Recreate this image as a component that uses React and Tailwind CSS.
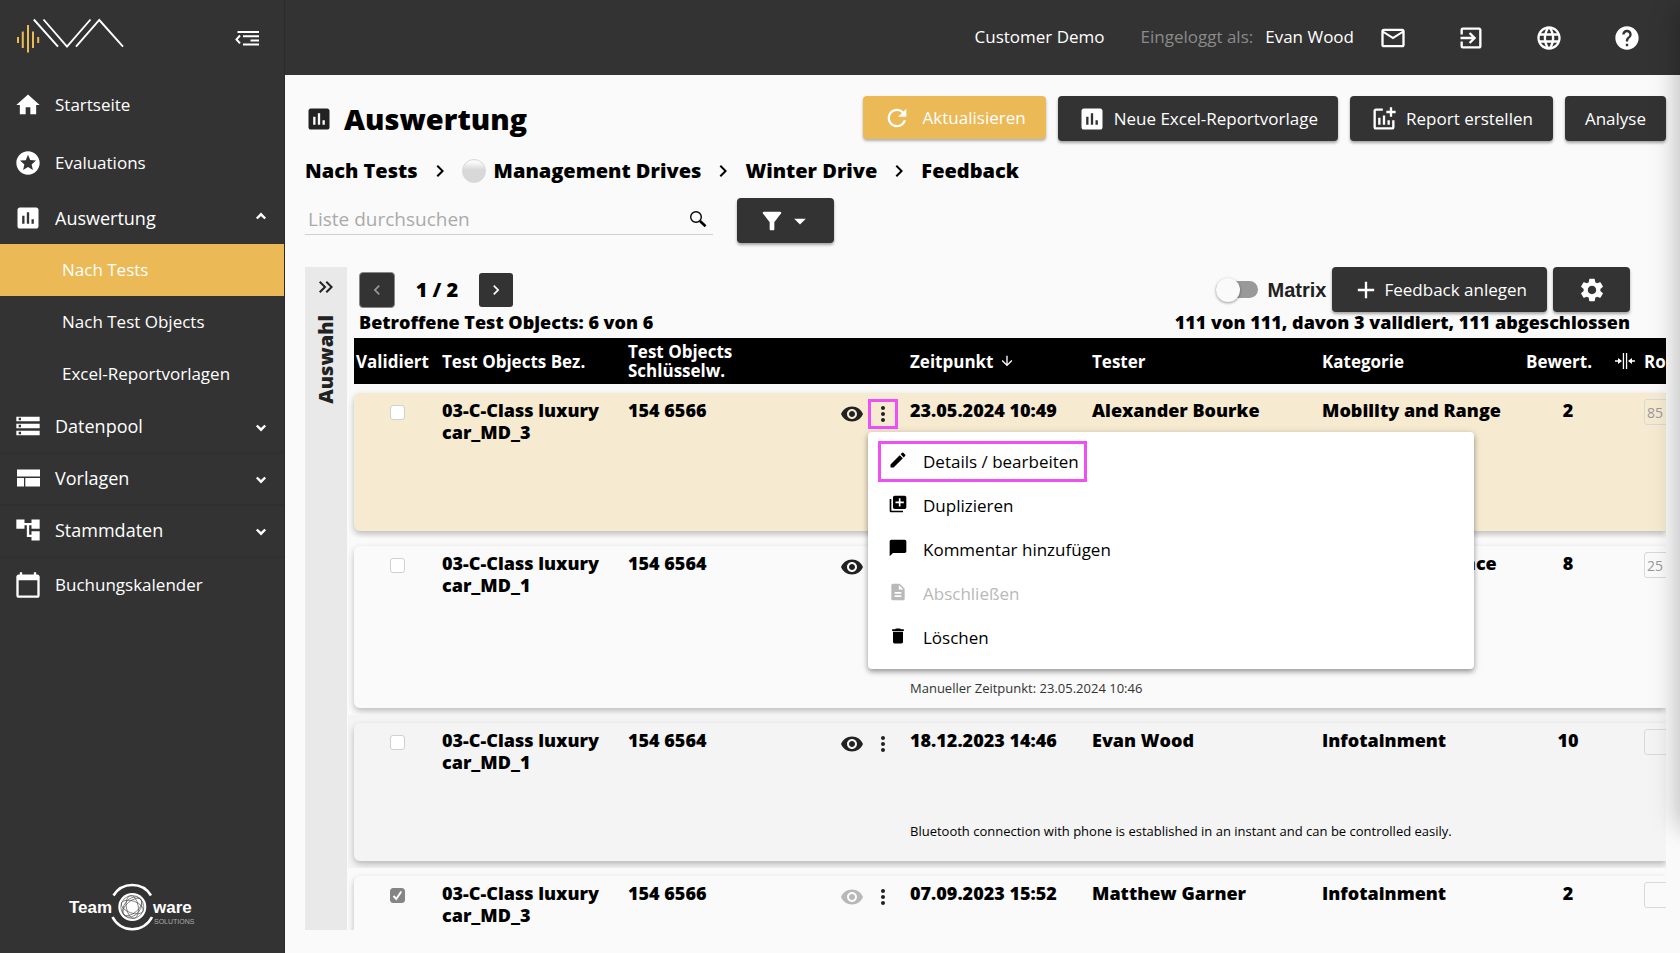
import {
  MdHome,
  MdStars,
  MdAssessment,
  MdStorage,
  MdAccountTree,
  MdCalendarToday,
  MdMailOutline,
  MdExitToApp,
  MdLanguage,
  MdHelp,
  MdRefresh,
  MdAddchart,
  MdFilterAlt,
  MdArrowDropDown,
  MdChevronLeft,
  MdChevronRight,
  MdKeyboardDoubleArrowRight,
  MdAdd,
  MdSettings,
  MdArrowDownward,
  MdVisibility,
  MdMoreVert,
  MdEdit,
  MdLibraryAdd,
  MdChatBubble,
  MdDescription,
  MdDelete,
} from 'react-icons/md';

const GRID = 'grid grid-cols-[88px_186px_212px_70px_182px_230px_minmax(204px,1fr)_118px_22px]';

const rows = [
  { id: 1, name: '03-C-Class luxury car_MD_3', key: '154 6566', date: '23.05.2024 10:49', tester: 'Alexander Bourke', category: 'Mobility and Range', rating: 2, value: '85', selected: true, menu: true },
  { id: 2, name: '03-C-Class luxury car_MD_1', key: '154 6564', date: '', tester: '', category: 'Drive Performance', rating: 8, value: '25', note: 'Manueller Zeitpunkt: 23.05.2024 10:46', manual: true },
  { id: 3, name: '03-C-Class luxury car_MD_1', key: '154 6564', date: '18.12.2023 14:46', tester: 'Evan Wood', category: 'Infotainment', rating: 10, value: '', note: 'Bluetooth connection with phone is established in an instant and can be controlled easily.', striped: true },
  { id: 4, name: '03-C-Class luxury car_MD_3', key: '154 6566', date: '07.09.2023 15:52', tester: 'Matthew Garner', category: 'Infotainment', rating: 2, value: '', checked: true },
];

const menuItems = [
  { label: 'Details / bearbeiten', icon: MdEdit, marked: true },
  { label: 'Duplizieren', icon: MdLibraryAdd },
  { label: 'Kommentar hinzufügen', icon: MdChatBubble },
  { label: 'Abschließen', icon: MdDescription, disabled: true },
  { label: 'Löschen', icon: MdDelete },
];

const Logo = () => (
  <svg className="w-[112px] h-9" viewBox="14 18 112 36" fill="none" aria-label="Logo">
    <path d="M18 37v6M22.8 31.5v16.5M28 25v27.5M33 31.5v16.5M38.2 37v6" stroke="#ebb955" strokeWidth="2" />
    <path
      d="M33.8 19.5 58 46.7M43.5 19.5 67 46.5 90.5 19.5M76 46.7 99.3 20 123 46.7"
      stroke="#fff"
      strokeWidth="1.9"
    />
  </svg>
);

const CollapseIcon = () => (
  <svg className="w-6 h-4" viewBox="0 0 24 16" fill="none" stroke="#fff" strokeWidth="2">
    <path d="M2.5 2H24M8 6.2H24M15.5 10.4H24M8 14.5H24" />
    <path d="M5 5.5 1.5 9.4 5 13.3" />
  </svg>
);

const TemplateIcon = () => (
  <svg className="w-6 h-[18px]" viewBox="0 0 24 18" fill="#fff">
    <path d="M1 .5h23v7H1zM1 9h7v8.5H1zM9.3 9H24v8.5H9.3z" />
  </svg>
);

const Caret = ({ up }) => (
  <svg className={`w-3 h-2 ${up ? 'mb-1' : 'mt-1'}`} viewBox="0 0 12 8" fill="none" stroke="#fff" strokeWidth="2.4">
    <path d={up ? 'M1.8 6.5 6 2.3l4.2 4.2' : 'M1.8 1.5 6 5.7l4.2-4.2'} />
  </svg>
);

const SearchIcon = () => (
  <svg className="w-[18px] h-[18px]" viewBox="0 0 18 18" fill="none" stroke="#000">
    <circle cx="7" cy="7" r="5.3" strokeWidth="1.4" />
    <path d="m11 11 5.5 5.3" strokeWidth="2.6" />
  </svg>
);

const ResizeIcon = () => (
  <svg className="w-5 h-4" viewBox="0 0 20 16" fill="#fff">
    <path d="M0 7.3h3V5l4 3-4 3V8.7H0zM20 7.3h-3V5l-4 3 4 3V8.7h3zM7.8 0h1.3v16H7.8zM10.9 0h1.3v16h-1.3z" />
  </svg>
);

const TeamwareLogo = () => (
  <svg className="w-32 h-12" viewBox="68 883 128 48" aria-label="Teamware Solutions">
    <g fill="none" stroke="#fff" strokeWidth="2.6">
      <path d="M113.5 895.5a22 22 0 0 1 37.5 0" />
      <path d="M112.5 917a22 22 0 0 0 39.5 0" />
    </g>
    <circle cx="132.3" cy="907" r="14" fill="#fff" />
    <g fill="none" stroke="#444" strokeWidth=".6">
      <circle cx="132.3" cy="907" r="11.5" />
      <ellipse cx="132.3" cy="907" rx="11.5" ry="6" transform="rotate(20 132.3 907)" />
      <ellipse cx="132.3" cy="907" rx="11.5" ry="6" transform="rotate(-40 132.3 907)" />
      <ellipse cx="132.3" cy="907" rx="11.5" ry="6" transform="rotate(80 132.3 907)" />
      <ellipse cx="132.3" cy="907" rx="11.5" ry="8" transform="rotate(130 132.3 907)" />
    </g>
    <g fill="#fff" fontFamily="'Liberation Sans Narrow', 'Liberation Sans', sans-serif">
      <text x="69" y="913" fontSize="17" fontWeight="700">Team</text>
      <text x="153" y="913" fontSize="17" fontWeight="700">ware</text>
      <text x="154" y="924" fontSize="7" fill="#aaa">SOLUTIONS</text>
    </g>
  </svg>
);

const NavItem = ({ icon, label, caret, tall }) => (
  <a
    href="#"
    className={`flex items-center px-4 ${tall ? 'h-[58px] text-[17px]' : 'h-[52px] text-lg shadow-[0_1px_2px_rgba(0,0,0,0.1)]'}`}
  >
    <span className="w-6 flex justify-center shrink-0">{icon}</span>
    <span className="ml-[15px] flex-1">{label}</span>
    {caret && <span className="mr-px"><Caret up={caret === 'up'} /></span>}
  </a>
);

const SubItem = ({ label, active }) => (
  <a href="#" className={`flex items-center h-[52px] pl-[62px] text-[17px] ${active ? 'bg-[#ebb955]' : ''}`}>
    {label}
  </a>
);

const Sidebar = () => (
  <aside className="w-[285px] shrink-0 bg-[#333] border-r border-[#2b2b2b] text-white flex flex-col">
    <div className="h-[75px] flex items-center justify-between pl-[14px] pr-[25px]">
      <div className="pb-1"><Logo /></div>
      <button type="button" aria-label="Menü einklappen"><CollapseIcon /></button>
    </div>
    <nav className="flex flex-col pt-px">
      <NavItem tall icon={<MdHome className="size-7 shrink-0" />} label="Startseite" />
      <NavItem tall icon={<MdStars className="size-7 shrink-0" />} label="Evaluations" />
      <NavItem icon={<MdAssessment className="size-7 shrink-0" />} label="Auswertung" caret="up" />
      <SubItem label="Nach Tests" active />
      <SubItem label="Nach Test Objects" />
      <SubItem label="Excel-Reportvorlagen" />
      <NavItem icon={<MdStorage className="size-7 shrink-0" />} label="Datenpool" caret="down" />
      <NavItem icon={<TemplateIcon />} label="Vorlagen" caret="down" />
      <NavItem icon={<MdAccountTree className="size-7 shrink-0" />} label="Stammdaten" caret="down" />
      <NavItem tall icon={<MdCalendarToday className="size-7 shrink-0" />} label="Buchungskalender" />
    </nav>
    <div className="mt-auto mb-[22px] pl-[68px]">
      <TeamwareLogo />
    </div>
  </aside>
);

const Header = () => (
  <header className="h-[75px] shrink-0 bg-[#333] text-white text-[17px] flex items-center justify-end pr-[39px]">
    <div className="flex items-center pb-[2px]">
      <span>Customer Demo</span>
      <span className="ml-9 text-[#8a8a8a]">Eingeloggt als:</span>
      <span className="ml-3">Evan Wood</span>
    </div>
    <div className="ml-[25px] flex gap-[50px]">
      <button type="button" aria-label="Nachrichten"><MdMailOutline className="size-7" /></button>
      <button type="button" aria-label="Abmelden"><MdExitToApp className="size-7" /></button>
      <button type="button" aria-label="Sprache"><MdLanguage className="size-7" /></button>
      <button type="button" aria-label="Hilfe"><MdHelp className="size-7" /></button>
    </div>
  </header>
);

const DarkButton = ({ className = '', children, ...rest }) => (
  <button
    type="button"
    className={`flex items-center justify-center h-[45px] rounded bg-[#333] text-white text-[17px] whitespace-nowrap shadow-[0_2px_3px_rgba(0,0,0,0.35)] ${className}`}
    {...rest}
  >
    {children}
  </button>
);

const Breadcrumb = () => (
  <nav className="mt-4 flex items-center h-7 text-xl font-extrabold">
    <a href="#">Nach Tests</a>
    <MdChevronRight className="size-6 mx-[10px]" />
    <span className="size-6 mr-2 rounded-full border border-[#d8d8d8] bg-linear-to-b from-[#fafafa] from-10% to-[#d8d8d8] to-45%"></span>
    <a href="#">Management Drives</a>
    <MdChevronRight className="size-6 mx-[10px]" />
    <a href="#">Winter Drive</a>
    <MdChevronRight className="size-6 mx-[10px]" />
    <a href="#">Feedback</a>
  </nav>
);

const ContextMenu = () => (
  <div
    role="menu"
    className="absolute z-10 top-[33px] left-0 w-[606px] h-[237px] py-[9px] px-[10px] rounded bg-white text-[17px] font-normal shadow-[0_3px_5px_rgba(0,0,0,0.3),0_1px_8px_rgba(0,0,0,0.15)]"
  >
    {menuItems.map(({ label, icon: Icon, marked, disabled }) => (
      <button
        key={label}
        type="button"
        role="menuitem"
        disabled={disabled}
        className={`flex items-center w-[209px] h-[41px] mb-[3px] border-[3px] whitespace-nowrap ${marked ? 'border-[#ee50f5]' : 'border-transparent'} ${disabled ? 'text-[#b9b9b9]' : 'text-black'}`}
      >
        <Icon className="size-5 shrink-0 ml-[7px] mr-[15px] mb-1" />
        {label}
      </button>
    ))}
  </div>
);

const FeedbackRow = ({ row }) => {
  const tone = row.striped ? 'bg-[#f4f4f4]' : 'bg-[#fafafa]';
  return (
    <tbody className={`block pt-2 pb-[7px] pl-[6px] ${tone} ${row.menu ? '' : 'overflow-hidden'}`}>
      <tr
        className={`${GRID} grid-rows-[auto_1fr] rounded-l-md text-lg font-extrabold leading-[22px] shadow-[0_3px_6px_rgba(0,0,0,0.25)] ${row.manual ? 'min-h-[162px]' : 'min-h-[138px]'} ${row.selected ? 'bg-[#f6ead1]' : tone}`}
      >
        <td className="pt-3 pl-9">
          <label className="grid size-[15px]">
            <input
              type="checkbox"
              aria-label={`Validiert ${row.id}`}
              defaultChecked={row.checked}
              className="peer col-start-1 row-start-1 appearance-none size-[15px] rounded-[3px] border border-[#d0d0d0] bg-white checked:bg-[#858585] checked:border-[#858585]"
            />
            <svg
              className="col-start-1 row-start-1 size-[15px] invisible peer-checked:visible pointer-events-none"
              viewBox="0 0 15 15"
              fill="none"
              stroke="#fff"
              strokeWidth="2"
            >
              <path d="m3.5 8 2.8 3 5-7.5" />
            </svg>
          </label>
        </td>
        <td className="pt-[6px]">{row.name}</td>
        <td className="pt-[6px]">{row.key}</td>
        <td className="flex items-start pt-[6px]">
          <button type="button" aria-label="Ansehen" className="h-[30px]">
            <MdVisibility className={`size-6 text-[#222] ${row.checked ? 'opacity-30' : ''}`} />
          </button>
          <div className="relative ml-1">
            <button
              type="button"
              aria-label="Aktionen"
              className={`flex items-center justify-center size-[30px] border-[3px] ${row.menu ? 'border-[#ee50f5]' : 'border-transparent'}`}
            >
              <MdMoreVert className="size-6 shrink-0 text-[#222]" />
            </button>
            {row.menu && <ContextMenu />}
          </div>
        </td>
        <td className="pt-[6px]">{row.date}</td>
        <td className="pt-[6px]">{row.tester}</td>
        <td className="pt-[6px]">{row.category}</td>
        <td className="pt-[6px] w-[84px] text-center">{row.rating}</td>
        <td className="pt-[6px] overflow-hidden">
          <input
            type="text"
            aria-label={`Rohwert ${row.id}`}
            defaultValue={row.value}
            className="block w-16 h-[26px] pl-[2px] rounded-[3px] border border-[#d9d9d9] bg-transparent text-sm font-normal text-[#999]"
          />
        </td>
        {row.note && (
          <td
            className={`col-start-5 col-span-4 self-end text-[13px] font-normal leading-5 ${row.manual ? 'pb-[10px] text-[#333]' : 'pb-5'}`}
          >
            {row.note}
          </td>
        )}
      </tr>
    </tbody>
  );
};

const FeedbackTable = () => (
  <table className="block">
    <thead className="block pl-[6px]">
      <tr className={`${GRID} items-center h-[46px] mb-px bg-black text-white text-left text-[17px] leading-[19px] font-extrabold`}>
        <th className="pl-[2px]">Validiert</th>
        <th>Test Objects Bez.</th>
        <th className="pr-20">Test Objects Schlüsselw.</th>
        <th aria-label="Aktionen"></th>
        <th>
          <span className="flex items-center">
            Zeitpunkt <MdArrowDownward className="size-4 ml-[6px]" />
          </span>
        </th>
        <th>Tester</th>
        <th>Kategorie</th>
        <th>
          <span className="flex items-center justify-between pr-[9px]">
            Bewert. <ResizeIcon />
          </span>
        </th>
        <th className="overflow-hidden whitespace-nowrap">Ro</th>
      </tr>
    </thead>
    {rows.map((row) => (
      <FeedbackRow key={row.id} row={row} />
    ))}
  </table>
);

function App() {
  return (
    <div className="h-screen flex overflow-hidden bg-[#fafafa] text-black font-['Open_Sans',sans-serif]">
      <Sidebar />

      <div className="flex-1 min-w-0 flex flex-col">
        <Header />

        <main className="flex-1 min-h-0 flex flex-col pt-[21px] pl-5 pr-[14px] pb-[23px]">
          <div className="flex items-center justify-between">
            <h1 className="flex items-center text-[29px] leading-[45px] font-extrabold">
              <MdAssessment className="size-7 mr-[11px] text-[#222]" />
              Auswertung
            </h1>
            <div className="flex items-start gap-3">
              <button
                type="button"
                className="flex items-center h-[43px] px-5 rounded bg-[#ebb955] text-white text-[17px] shadow-[0_2px_3px_rgba(0,0,0,0.3)]"
              >
                <MdRefresh className="size-7 mr-3" />
                Aktualisieren
              </button>
              <DarkButton className="px-5"><MdAssessment className="size-7 mr-2" />Neue Excel-Reportvorlage</DarkButton>
              <DarkButton className="px-5"><MdAddchart className="size-7 mr-2" />Report erstellen</DarkButton>
              <DarkButton className="px-5">Analyse</DarkButton>
            </div>
          </div>

          <Breadcrumb />

          <div className="mt-[13px] flex items-start">
            <div className="flex items-center w-[408px] h-[37px] pt-[6px] border-b border-[#d0d0d0]">
              <input
                type="search"
                aria-label="Liste durchsuchen"
                placeholder="Liste durchsuchen"
                className="flex-1 pl-[3px] text-[19px] leading-7 outline-none placeholder:text-[#aaa]"
              />
              <button type="button" aria-label="Suchen" className="mr-[6px]"><SearchIcon /></button>
            </div>
            <DarkButton className="ml-6 w-[97px]" aria-label="Filter">
              <MdFilterAlt className="size-7" />
              <MdArrowDropDown className="size-7" />
            </DarkButton>
          </div>

          <div className="mt-6 flex-1 min-h-0 flex">
            <button type="button" className="w-[42px] shrink-0 flex flex-col items-center justify-start pt-2 bg-[#e9e9e9] text-[#222]">
              <MdKeyboardDoubleArrowRight className="size-6" />
              <span className="mt-4 text-xl font-extrabold [writing-mode:vertical-rl] rotate-180">Auswahl</span>
            </button>

            <section className="flex-1 min-w-0 ml-px overflow-hidden">
              <div className="flex items-center justify-between h-[45px] pl-[11px] pr-9">
                <div className="flex items-center">
                  <button type="button" disabled aria-label="Vorherige Seite" className="flex items-center justify-center size-9 rounded border border-[#888] bg-[#333] text-[#999]">
                    <MdChevronLeft className="size-5" />
                  </button>
                  <span className="w-[84px] text-center text-xl font-extrabold">1 / 2</span>
                  <button type="button" aria-label="Nächste Seite" className="flex items-center justify-center w-[34px] h-[34px] rounded-[3px] bg-[#333] text-white">
                    <MdChevronRight className="size-5" />
                  </button>
                </div>
                <div className="flex items-center">
                  <label className="flex items-center mr-[6px] text-xl font-bold text-[#222] font-['Liberation_Sans',sans-serif]">
                    <input type="checkbox" role="switch" className="sr-only" />
                    <span className="flex items-center w-[42px] h-[17px] mr-[10px] rounded-full bg-[#999]">
                      <span className="size-6 shrink-0 rounded-full bg-[#fafafa] shadow-[0_1px_3px_rgba(0,0,0,0.4)]"></span>
                    </span>
                    Matrix
                  </label>
                  <DarkButton className="px-5"><MdAdd className="size-7 mr-1" />Feedback anlegen</DarkButton>
                  <DarkButton className="ml-[6px] w-[77px]" aria-label="Einstellungen"><MdSettings className="size-7" /></DarkButton>
                </div>
              </div>
              <div className="flex items-center justify-between h-[26px] pl-[11px] pr-9 pb-[6px] text-lg font-extrabold">
                <span>Betroffene Test Objects: 6 von 6</span>
                <span>111 von 111, davon 3 validiert, 111 abgeschlossen</span>
              </div>
              <FeedbackTable />
            </section>
          </div>
        </main>
      </div>

      {/* closed drawer, only its shadow reaches into the page */}
      <div className="fixed top-0 left-full w-10 bottom-[140px] shadow-[0_16px_24px_2px_rgba(0,0,0,0.14),0_6px_30px_5px_rgba(0,0,0,0.12)]"></div>
    </div>
  );
}

export default App;
